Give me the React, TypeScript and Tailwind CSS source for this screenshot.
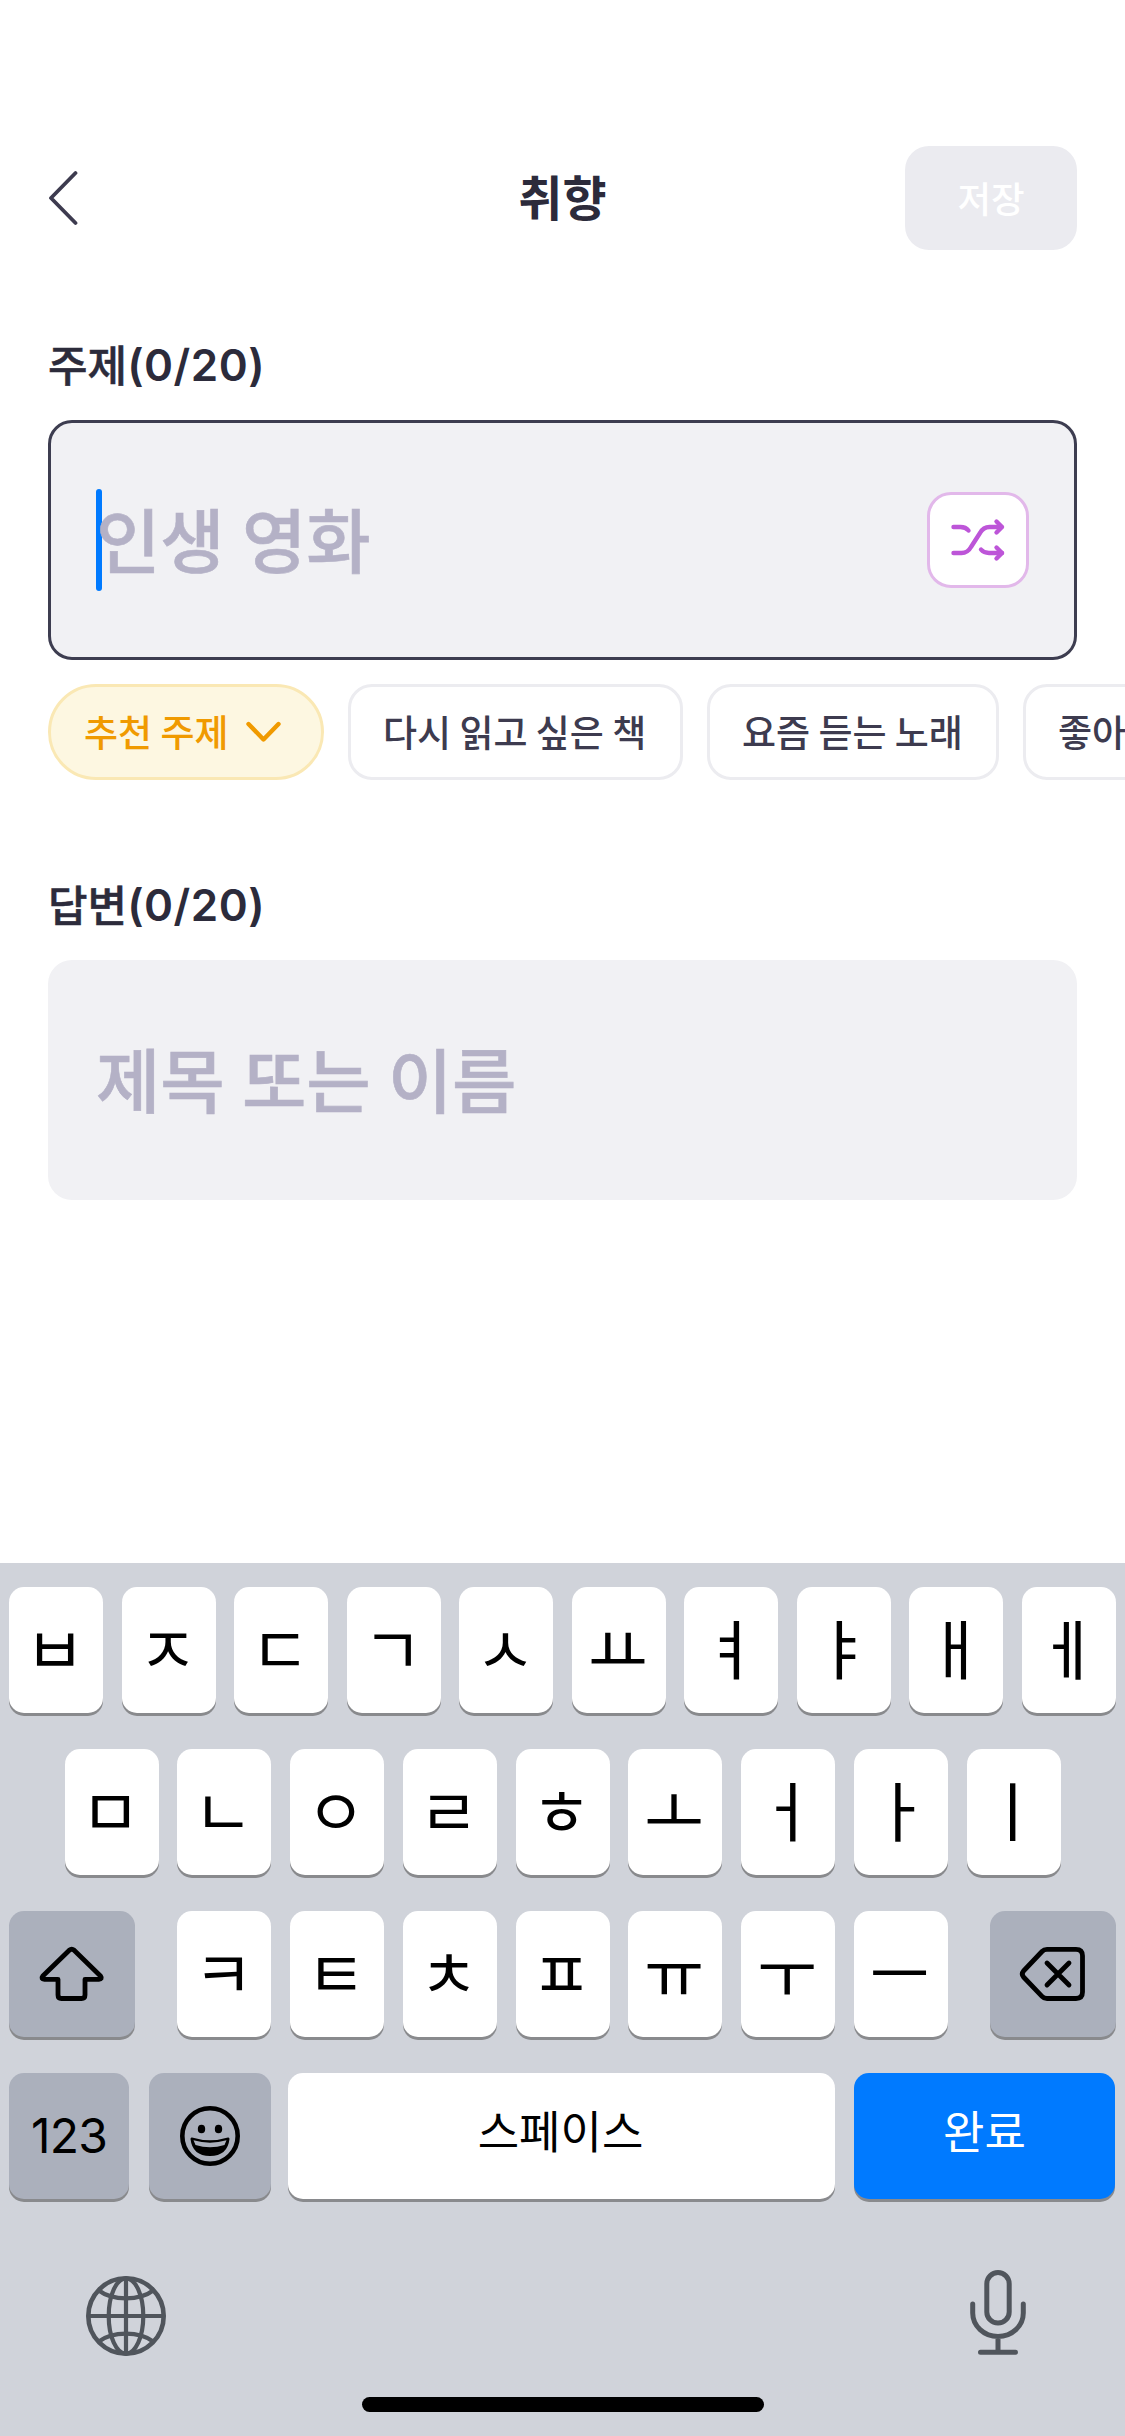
import type { ReactNode } from 'react';
import clsx from 'clsx';

const ROW_1 = ['ㅂ', 'ㅈ', 'ㄷ', 'ㄱ', 'ㅅ', 'ㅛ', 'ㅕ', 'ㅑ', 'ㅐ', 'ㅔ'];
const ROW_2 = ['ㅁ', 'ㄴ', 'ㅇ', 'ㄹ', 'ㅎ', 'ㅗ', 'ㅓ', 'ㅏ', 'ㅣ'];
const ROW_3 = ['ㅋ', 'ㅌ', 'ㅊ', 'ㅍ', 'ㅠ', 'ㅜ', 'ㅡ'];

const TOPICS = [
  { label: '다시 읽고 싶은 책', width: 'w-[335px]' },
  { label: '요즘 듣는 노래', width: 'w-[292px]' },
  { label: '좋아', width: 'w-[292px]' },
];

// ── Icons ─────────────────────────────────────────────────────────────────────
function ShuffleIcon() {
  return (
    <svg width="96" height="90" viewBox="3 3 96 90" fill="none" stroke="#bd55d8" strokeWidth="4.4" strokeLinecap="round" strokeLinejoin="round">
      <path d="M26.500 35h7c3.500 0 6 1 8 3.500" />
      <path d="M26.500 61h8c4.500 0 7-1.500 9.500-6l9-14c2.500-4.500 5-6 9.500-6h12" />
      <path d="M54 57.500c2 2.500 4.500 3.500 8 3.500h13" />
      <path d="M69.500 29.500l5.500 5.500-5.500 5.500M69.500 55.500l5.500 5.500-5.500 5.500" />
    </svg>
  );
}

function ShiftIcon() {
  return (
    <svg width="126" height="126" viewBox="0 0 126 126" fill="none" stroke="#000" strokeWidth="4.800" strokeLinejoin="round">
      <path d="M60.300 39.200q2.400-2 4.800 0L91.500 65q2.200 3-1.700 3.300H76V84q0 3.500-3.500 3.500H52.500q-3.500 0-3.500-3.500V68.300H35.500q-4-.3-1.700-3.300z" />
    </svg>
  );
}

function DeleteIcon() {
  return (
    <svg width="126" height="126" viewBox="0 0 126 126" fill="none" stroke="#000" strokeWidth="4.800" strokeLinecap="round" strokeLinejoin="round">
      <path d="M57 38.300H86q6.500 0 6.500 6.500V81q0 6.500-6.500 6.500H57q-3 0-5-2.200L33.500 66q-2.500-3 0-6L52 40.500q2-2.200 5-2.200z" />
      <path d="M57 52l22 22M79 52L57 74" />
    </svg>
  );
}

function EmojiIcon() {
  return (
    <svg width="60" height="60" viewBox="0 0 60 60">
      <circle cx="30" cy="30" r="27.700" fill="none" stroke="#000" strokeWidth="4.600" />
      <ellipse cx="21.500" cy="23" rx="3.700" ry="4.300" />
      <ellipse cx="38.500" cy="23" rx="3.700" ry="4.300" />
      <path d="M12 31.500Q30 37 48 31.500q1.500-.3 1.500 1.500Q47.500 50 30 50T10.500 33q0-1.800 1.500-1.500z" />
      <path fill="#abb0bc" d="M13.500 34.300Q30 39 46.500 34.300L44.500 39Q30 43.500 15.500 39z" />
    </svg>
  );
}

function GlobeIcon() {
  return (
    <svg width="80" height="80" viewBox="0 0 80 80" fill="none" stroke="#50555c" strokeWidth="4.200">
      <circle cx="40" cy="40" r="37.700" strokeWidth="4.600" />
      <ellipse cx="40" cy="40" rx="17.300" ry="37.700" />
      <path d="M40 2v76M2 40h76" />
      <path d="M12 14q11 8.300 28 8.300T68 14M12 66q11-8.300 28-8.300T68 66" />
    </svg>
  );
}

function MicIcon() {
  return (
    <svg width="56" height="86" viewBox="0 0 56 86" fill="none" stroke="#50555c" strokeWidth="5" strokeLinecap="round">
      <rect x="16.800" y="2.600" width="22.400" height="50.500" rx="11.200" />
      <path d="M2.700 34v9a25.300 23.500 0 0 0 50.600 0v-9M28 67v14M10.500 82.300h35" />
    </svg>
  );
}

// ── Form ──────────────────────────────────────────────────────────────────────
function FieldLabel({ name, count }: { name: string; count: string }) {
  return (
    <div className="flex h-[60px] items-center pb-0.5 text-[#2c2b3b]">
      <span className="-mt-1 text-[43px] font-medium [-webkit-text-stroke:0.5px_#2c2b3b]">{name}</span>
      <span className="font-['Inter'] text-[44px] font-semibold tracking-[0.5px]">{count}</span>
    </div>
  );
}

function Placeholder({ children }: { children: ReactNode }) {
  return (
    <span className="block pb-1 text-[70px] leading-none font-medium tracking-[-0.2px] text-[#b4b1c6] [word-spacing:2px] [-webkit-text-stroke:0.6px_#b4b1c6]">
      {children}
    </span>
  );
}

// ── Keyboard ──────────────────────────────────────────────────────────────────
function Key({ className, children }: { className?: string; children: ReactNode }) {
  return (
    <button
      className={clsx(
        'flex h-[126px] shrink-0 items-center justify-center rounded-[15px] shadow-[0_3px_0_#898a8d]',
        className,
      )}
    >
      {children}
    </button>
  );
}

function LetterKey({ letter }: { letter: string }) {
  return (
    <Key className="w-[94px] bg-white">
      <span className="pr-0.5 pb-2 text-[65px] leading-none">{letter}</span>
    </Key>
  );
}

export default function App() {
  return (
    <div className="flex h-[2436px] w-[1125px] flex-col overflow-hidden bg-white font-['Noto_Sans_CJK_KR',sans-serif]">
      {/* Header */}
      <header className="mt-[146px] grid h-[104px] grid-cols-3 items-center px-12">
        <svg width="30" height="56" viewBox="0 0 30 56" fill="none" stroke="#3d3b4f" strokeWidth="3.800" strokeLinecap="round" strokeLinejoin="round">
          <path d="M27.500 3L3 28l24.500 25" />
        </svg>
        <h1 className="pb-1.5 text-center text-[48px] leading-none font-bold text-[#2c2b3b]">취향</h1>
        <button className="h-[104px] w-[172px] justify-self-end rounded-3xl bg-[#ebebf0] text-[36.500px] font-medium text-white">
          저장
        </button>
      </header>

      {/* Topic */}
      <section className="mt-[86px] px-12">
        <FieldLabel name="주제" count="(0/20)" />
        <div className="mt-6 flex h-[240px] items-center justify-between rounded-3xl border-3 border-[#3d3d50] bg-[#f1f1f4] px-[45px]">
          <div className="flex items-center">
            <div className="h-[102px] w-1.5 rounded-full bg-[#007aff]" />
            <div className="-ml-1.5">
              <Placeholder>인생 영화</Placeholder>
            </div>
          </div>
          <button className="h-24 w-[102px] overflow-hidden rounded-3xl border-3 border-[#e2b8ea] bg-white">
            <ShuffleIcon />
          </button>
        </div>
      </section>

      {/* Suggested topics */}
      <div className="mt-6 flex gap-6 pl-12 text-[37px] font-medium text-[#3d3b4f]">
        <button className="flex h-24 w-[276px] shrink-0 items-center gap-[17px] rounded-full border-3 border-[#fae8b4] bg-[#fdf7e1] pl-[33px] text-[#f09a00]">
          추천 주제
          <svg width="35" height="22" viewBox="0 0 35 22" fill="none" stroke="currentColor" strokeWidth="4.400" strokeLinecap="round" strokeLinejoin="round">
            <path d="M2.500 3l15 15.500L32.500 3" />
          </svg>
        </button>
        {TOPICS.map((topic) => (
          <button
            key={topic.label}
            className={clsx(
              'h-24 shrink-0 rounded-3xl border-3 border-[#ececf0] bg-white pl-8 text-left whitespace-nowrap',
              topic.width,
            )}
          >
            {topic.label}
          </button>
        ))}
      </div>

      {/* Answer */}
      <section className="mt-24 px-12">
        <FieldLabel name="답변" count="(0/20)" />
        <div className="mt-6 flex h-[240px] items-center rounded-3xl bg-[#f1f1f4] pl-12">
          <Placeholder>제목 또는 이름</Placeholder>
        </div>
      </section>

      {/* Keyboard */}
      <div className="mt-auto flex h-[873px] flex-col bg-[#d0d3da] px-[9px] pt-6 text-black">
        <div className="flex flex-col gap-9">
          <div className="flex justify-between">
            {ROW_1.map((l) => <LetterKey key={l} letter={l} />)}
          </div>
          <div className="flex justify-between px-[55.5px]">
            {ROW_2.map((l) => <LetterKey key={l} letter={l} />)}
          </div>
          <div className="flex justify-between">
            <Key className="w-[126px] bg-[#abb0bc]"><ShiftIcon /></Key>
            <div className="flex gap-[18.700px]">
              {ROW_3.map((l) => <LetterKey key={l} letter={l} />)}
            </div>
            <Key className="w-[126px] bg-[#abb0bc]"><DeleteIcon /></Key>
          </div>
          <div className="flex">
            <Key className="mr-5 w-[120px] bg-[#abb0bc]">
              <span className="font-['Inter'] text-[48px] tracking-[-0.8px]">123</span>
            </Key>
            <Key className="mr-[17px] w-[122px] bg-[#abb0bc]"><EmojiIcon /></Key>
            <Key className="mr-[19px] w-[547px] bg-white">
              <span className="pr-0.5 pb-3 text-[45px]">스페이스</span>
            </Key>
            <Key className="w-[261px] bg-[#007aff]">
              <span className="pb-3 text-[45px] text-white">완료</span>
            </Key>
          </div>
        </div>
        <div className="mt-[71px] flex h-[86px] items-end justify-between pr-[90px] pl-[77px]">
          <GlobeIcon />
          <MicIcon />
        </div>
        <div className="mx-auto mt-[41px] h-[15px] w-[402px] rounded-full bg-black" />
      </div>
    </div>
  );
}
